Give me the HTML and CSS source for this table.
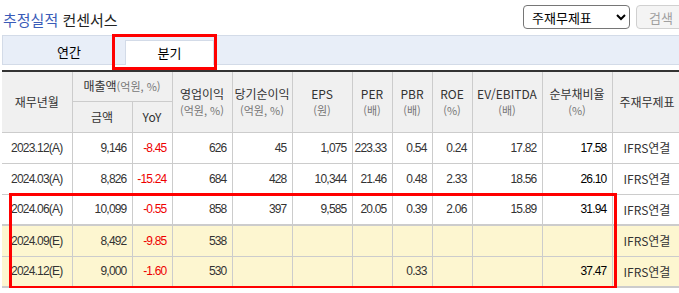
FILE: index.html
```html
<!DOCTYPE html>
<html lang="ko">
<head>
    <meta charset="UTF-8">
    <meta name="viewport" content="width=device-width, initial-scale=1.0">
    <title>추정실적 컨센서스</title>
    <link rel="stylesheet" href="styles.css">
</head>
<body>
    <div class="page">
        <div class="top">
            <h3 class="title"><span class="blue">추정실적</span> 컨센서스</h3>
            <div class="search">
                <select class="sel">
                    <option>주재무제표</option>
                </select>
                <button class="btn" disabled>검색</button>
            </div>
        </div>
        <ul class="tabs">
            <li class="tab">연간</li>
            <li class="tab on">분기</li>
        </ul>
        <table class="grid">
            <colgroup>
                <col style="width:70px"><col style="width:60px"><col style="width:40px">
                <col style="width:60px"><col style="width:60px"><col style="width:60px">
                <col style="width:40px"><col style="width:40px"><col style="width:40px">
                <col style="width:70px"><col style="width:70px"><col style="width:70px">
            </colgroup>
            <thead>
                <tr class="h1">
                    <th rowspan="2">재무년월</th>
                    <th colspan="2">매출액<span class="unit">(억원, %)</span></th>
                    <th rowspan="2">영업이익<span class="unit blk">(억원, %)</span></th>
                    <th rowspan="2">당기순이익<span class="unit blk">(억원, %)</span></th>
                    <th rowspan="2">EPS<span class="unit blk">(원)</span></th>
                    <th rowspan="2">PER<span class="unit blk">(배)</span></th>
                    <th rowspan="2">PBR<span class="unit blk">(배)</span></th>
                    <th rowspan="2">ROE<span class="unit blk">(%)</span></th>
                    <th rowspan="2">EV/EBITDA<span class="unit blk">(배)</span></th>
                    <th rowspan="2">순부채비율<span class="unit blk">(%)</span></th>
                    <th rowspan="2">주재무제표</th>
                </tr>
                <tr class="h2">
                    <th>금액</th>
                    <th>YoY</th>
                </tr>
            </thead>
            <tbody>
                <tr>
                    <td class="date">2023.12(A)</td>
                    <td class="num">9,146</td><td class="num red">-8.45</td>
                    <td class="num">626</td><td class="num">45</td><td class="num">1,075</td>
                    <td class="num">223.33</td><td class="num">0.54</td><td class="num">0.24</td>
                    <td class="num">17.82</td><td class="num strong">17.58</td>
                    <td class="std">IFRS연결</td>
                </tr>
                <tr>
                    <td class="date">2024.03(A)</td>
                    <td class="num">8,826</td><td class="num red">-15.24</td>
                    <td class="num">684</td><td class="num">428</td><td class="num">10,344</td>
                    <td class="num">21.46</td><td class="num">0.48</td><td class="num">2.33</td>
                    <td class="num">18.56</td><td class="num strong">26.10</td>
                    <td class="std">IFRS연결</td>
                </tr>
                <tr>
                    <td class="date">2024.06(A)</td>
                    <td class="num">10,099</td><td class="num red">-0.55</td>
                    <td class="num">858</td><td class="num">397</td><td class="num">9,585</td>
                    <td class="num">20.05</td><td class="num">0.39</td><td class="num">2.06</td>
                    <td class="num">15.89</td><td class="num strong">31.94</td>
                    <td class="std">IFRS연결</td>
                </tr>
                <tr class="est first">
                    <td class="date">2024.09(E)</td>
                    <td class="num">8,492</td><td class="num red">-9.85</td>
                    <td class="num">538</td><td class="num"></td><td class="num"></td>
                    <td class="num"></td><td class="num"></td><td class="num"></td>
                    <td class="num"></td><td class="num strong"></td>
                    <td class="std">IFRS연결</td>
                </tr>
                <tr class="est">
                    <td class="date">2024.12(E)</td>
                    <td class="num">9,000</td><td class="num red">-1.60</td>
                    <td class="num">530</td><td class="num"></td><td class="num"></td>
                    <td class="num"></td><td class="num">0.33</td><td class="num"></td>
                    <td class="num"></td><td class="num strong">37.47</td>
                    <td class="std">IFRS연결</td>
                </tr>
            </tbody>
        </table>
        <div class="mark mark-tab"></div>
        <div class="mark mark-rows"></div>
    </div>
</body>
</html>
```

FILE: styles.css
```css
html, body {
    overflow: hidden;
}
body {
    margin: 0;
    padding: 0;
    background: #fff;
    color: #333;
    font-family: "Noto Sans CJK KR", "Liberation Sans", sans-serif;
    font-size: 12px;
}
.page {
    position: relative;
    width: 688px;
    padding-left: 2px;
}
.top {
    display: flex;
    justify-content: space-between;
    align-items: flex-start;
    height: 35px;
    padding-right: 4px;
    box-sizing: border-box;
}
.title {
    margin: 10px 0 0 1px;
    font-size: 15px;
    line-height: 19px;
    font-weight: normal;
    color: #222;
}
.title .blue {
    color: #3a5bb8;
}
.search {
    display: flex;
    gap: 6px;
    margin-top: 5px;
}
.sel {
    width: 107px;
    height: 24px;
    padding: 0 4px;
    border: 1px solid #767676;
    border-radius: 4px;
    background: #fff;
    color: #000;
    font-family: "Noto Sans CJK KR", sans-serif;
    font-size: 13px;
}
.btn {
    width: 50px;
    height: 24px;
    border: 1px solid #d0d0d0;
    border-radius: 4px;
    background: #f4f4f4;
    color: #a0a0a0;
    font-family: "Noto Sans CJK KR", sans-serif;
    font-size: 13px;
    padding: 0;
}
.tabs {
    display: flex;
    align-items: flex-end;
    margin: 0;
    padding: 4px 0 0 10px;
    list-style: none;
    height: 24px;
    background: #e8eef8;
    border: 1px solid #d3dbe8;
    border-right: none;
}
.tab {
    width: 112px;
    height: 25px;
    margin-bottom: -1px;
    text-align: center;
    font-size: 13px;
    line-height: 24px;
    color: #000;
    box-sizing: border-box;
}
.tab.on {
    width: 89px;
    background: #fff;
    border: 1px solid #d3dbe8;
    border-bottom: none;
}
.grid {
    margin-top: 5px;
    width: 680px;
    table-layout: fixed;
    border-collapse: collapse;
    border-top: 2px solid #333;
    border-bottom: 2px solid #ccc;
}
.grid th,
.grid td {
    border: 1px solid #ccc;
    padding: 0;
    overflow: hidden;
    white-space: nowrap;
}
.grid th:first-child,
.grid td:first-child {
    border-left: none;
}
.grid th {
    background: #f0f0f0;
    font-weight: normal;
    font-size: 12px;
    line-height: 17px;
    color: #333;
    text-align: center;
}
.grid .h1 {
    height: 30px;
}
.grid .h2 {
    height: 31px;
}
.unit {
    font-size: 11px;
    color: #777;
}
.unit.blk {
    display: block;
}
.grid tbody tr {
    height: 31px;
}
.grid td {
    font-family: "Liberation Sans", sans-serif;
    font-size: 12px;
    letter-spacing: -0.8px;
    color: #333;
}
.grid .date {
    text-align: center;
}
.grid .num {
    text-align: right;
    padding-right: 5px;
}
.grid .red {
    color: #e00;
}
.grid .strong {
    color: #000;
}
.grid .std {
    font-family: "Noto Sans CJK KR", sans-serif;
    letter-spacing: 0;
    text-align: center;
}
.grid .est td {
    background: #fdf6d0;
}
.grid .est.first td {
    border-top: 2px solid #ccc;
}
.mark {
    position: absolute;
    border: 3px solid #f00;
    box-sizing: border-box;
}
.mark-tab {
    left: 112px;
    top: 34px;
    width: 105px;
    height: 36px;
}
.mark-rows {
    left: 9px;
    top: 193px;
    width: 608px;
    height: 96px;
}
```
